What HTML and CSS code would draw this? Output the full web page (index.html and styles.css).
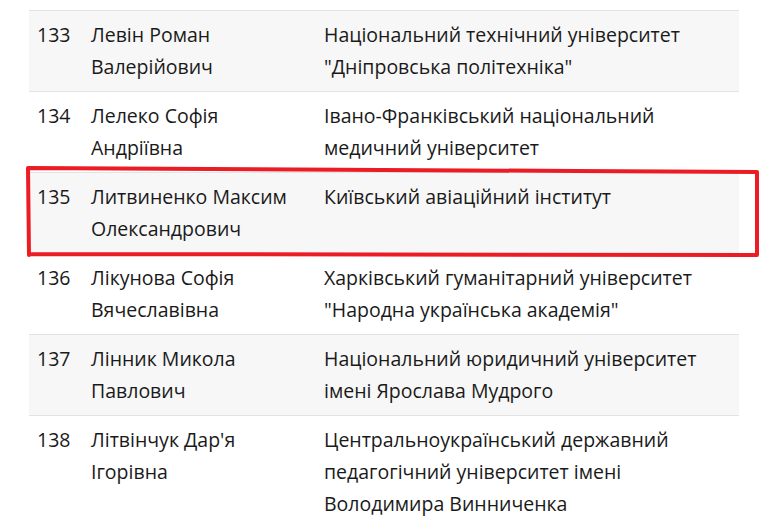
FILE: index.html
```html
<!DOCTYPE html>
<html lang="uk">
<head>
<meta charset="utf-8">
<link rel="stylesheet" href="styles.css">
</head>
<body>
<div class="page">
  <table class="list">
    <colgroup>
      <col class="c-num">
      <col class="c-name">
      <col class="c-uni">
    </colgroup>
    <tbody>
      <tr class="odd"><td>133</td><td>Левін Роман Валерійович</td><td>Національний технічний університет "Дніпровська політехніка"</td></tr>
      <tr><td>134</td><td>Лелеко Софія Андріївна</td><td>Івано-Франківський національний медичний університет</td></tr>
      <tr class="odd"><td>135</td><td>Литвиненко Максим Олександрович</td><td>Київський авіаційний інститут</td></tr>
      <tr><td>136</td><td>Лікунова Софія Вячеславівна</td><td>Харківський гуманітарний університет "Народна українська академія"</td></tr>
      <tr class="odd"><td>137</td><td>Лінник Микола Павлович</td><td>Національний юридичний університет імені Ярослава Мудрого</td></tr>
      <tr><td>138</td><td>Літвінчук Дар'я Ігорівна</td><td>Центральноукраїнський державний педагогічний університет імені Володимира Винниченка</td></tr>
    </tbody>
  </table>
  <svg class="mark" width="761" height="523" viewBox="0 0 761 523">
    <polyline points="29,255 28,168 210,169 577,171 757,172 757,255 30,254" fill="none" stroke="#ec1c24" stroke-width="4" stroke-linejoin="round" stroke-linecap="round"/>
  </svg>
</div>
</body>
</html>
```
FILE: styles.css
```css
html, body {
  margin: 0;
  padding: 0;
  background: #ffffff;
}
.page {
  position: relative;
  width: 761px;
  height: 523px;
  overflow: hidden;
  padding-top: 10px;
  box-sizing: border-box;
}
.list {
  margin-left: 29px;
  width: 710px;
  border-collapse: collapse;
  table-layout: fixed;
  font-family: "Open Sans", "Liberation Sans", sans-serif;
  font-size: 19.5px;
  line-height: 32px;
  color: #1a1a1a;
}
.c-num { width: 54px; }
.c-name { width: 233px; }
.c-uni { width: 423px; }
.list tr {
  border-top: 1px solid #e3e3e3;
}
.list tr.odd {
  background: #f7f7f7;
}
.list td {
  vertical-align: top;
  padding: 8px 8px 8px 8px;
}
.mark {
  position: absolute;
  left: 0;
  top: 0;
  pointer-events: none;
}
```
